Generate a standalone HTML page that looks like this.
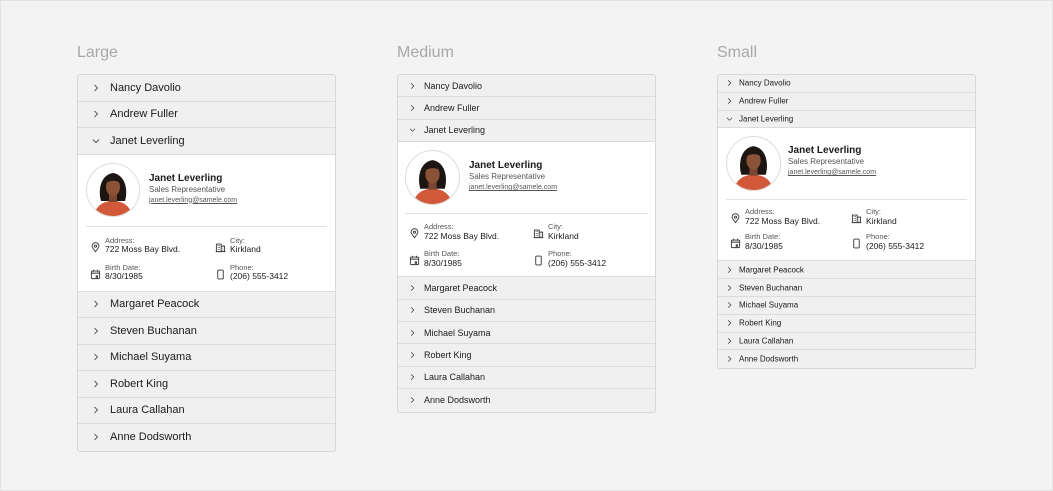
<!DOCTYPE html>
<html><head><meta charset="utf-8"><style>
*{margin:0;padding:0;box-sizing:border-box}
body{width:1053px;height:491px;background:#f3f3f3;font-family:"Liberation Sans",sans-serif;color:#1a1a1a;position:relative;overflow:hidden}
.fr{position:absolute;left:0;top:0;width:1053px;height:491px;border:1px solid #e2e2e2}
.t{position:absolute;font-size:16px;color:#a8a8a8}
.p{position:absolute;width:259px;border:1px solid #d8d8d8;border-radius:3px;background:#f0f0f0;overflow:hidden}
.r{position:relative;border-bottom:1px solid #dcdcdc;background:#f0f0f0}
.r:last-child{border-bottom:none}
.r span{position:absolute;top:50%;transform:translateY(-50%)}
.r svg.ch{position:absolute;top:50%;transform:translateY(-50%)}
.c{position:relative;background:#fff;border-bottom:1px solid #dcdcdc}
.c>*{position:absolute}
.lb{color:#555}
.dv{height:1px;background:#e2e2e2}
.em{color:#555;text-decoration:underline}
</style></head><body>
<div class="fr"></div>
<div class="t" style="left:77px;top:44px">Large</div>
<div class="t" style="left:397px;top:44px">Medium</div>
<div class="t" style="left:717px;top:44px">Small</div>
<div id="L" class="p" style="left:77px;top:74px"></div>
<div id="M" class="p" style="left:397px;top:74px"></div>
<div id="S" class="p" style="left:717px;top:74px"></div>
<script>
var names=["Nancy Davolio","Andrew Fuller","Janet Leverling","Margaret Peacock","Steven Buchanan","Michael Suyama","Robert King","Laura Callahan","Anne Dodsworth"];
function av(s){return '<svg width="'+s+'" height="'+s+'" viewBox="0 0 54 54"><circle cx="27" cy="27" r="26.5" fill="#fff" stroke="#ddd"/><clipPath id="cp'+s+'"><circle cx="27" cy="27" r="26"/></clipPath><g clip-path="url(#cp'+s+')"><path d="M15 38 C12 28 14 12 27 10 C40 12 42 28 39 38 Z" fill="#1d1512"/><path d="M8 56 C8 44 16 38 27 38 C38 38 46 44 46 56Z" fill="#d2583a"/><rect x="23" y="30" width="8" height="9" fill="#7a4630"/><ellipse cx="27" cy="24" rx="7" ry="9" fill="#8a5236"/><path d="M20 20 C22 13 32 13 34 20 C31 17 24 17 20 20Z" fill="#1d1512"/></g></svg>';}
function ic(t,s){var st='fill="none" stroke="#333" stroke-width="1.3"';var p={
pin:'<path d="M8 14 C4 9 3 7 3 6 A5 5 0 0 1 13 6 C13 7 12 9 8 14Z" '+st+'/><circle cx="8" cy="6" r="1.6" '+st+'/>',
city:'<path d="M2 14V3h7v11M9 6h5v8M1 14h14M4 5h1M6 5h1M4 8h1M6 8h1M4 11h1M6 11h1M11 9h1M11 12h1" '+st+'/>',
cal:'<rect x="2" y="3" width="12" height="11" rx="1.5" '+st+'/><path d="M2 6h12M5 1v3M11 1v3M9 10h2v2H9z" '+st+'/>',
ph:'<rect x="4" y="1.5" width="8" height="13" rx="1.5" '+st+'/>'}[t];
return '<svg width="'+s+'" height="'+s+'" viewBox="0 0 16 16">'+p+'</svg>';}
function chev(x,s,exp){var d=exp?'M2 5l6 6 6-6':'M5 2l6 6-6 6';return '<svg class="ch" style="left:'+x+'px" width="'+s+'" height="'+s+'" viewBox="0 0 16 16"><path d="'+d+'" fill="none" stroke="#333" stroke-width="1.6"/></svg>';}
function build(id,c){var h='';names.forEach(function(n,k){
var exp=k==2;h+='<div class="r" style="height:'+c.rh+'px;font-size:'+c.fs+'px">'+chev(c.cx,c.cs,exp)+'<span style="left:'+c.tx+'px">'+n+'</span></div>';
if(exp){var d=c.d;h+='<div class="c" style="height:'+d.h+'px">'+
'<div style="left:'+d.ax+'px;top:'+d.ay+'px">'+av(d.as)+'</div>'+
'<div style="left:'+d.nx+'px;top:'+d.ny+'px;font-size:'+d.nf+'px;font-weight:bold">Janet Leverling</div>'+
'<div class="lb" style="left:'+d.nx+'px;top:'+(d.ny+d.nf+2)+'px;font-size:'+d.sf+'px">Sales Representative</div>'+
'<div class="em" style="left:'+d.nx+'px;top:'+(d.ny+d.nf+d.sf+6)+'px;font-size:'+(d.sf-1)+'px">janet.leverling@samele.com</div>'+
'<div class="dv" style="left:'+d.ax+'px;right:'+d.ax+'px;top:'+d.dy+'px"></div>';
[[0,'pin','Address:','722 Moss Bay Blvd.'],[1,'city','City:','Kirkland'],[2,'cal','Birth Date:','8/30/1985'],[3,'ph','Phone:','(206) 555-3412']].forEach(function(f){
var col=f[0]%2,row=f[0]>>1;var x=col?d.c2:d.c1;var y=d.fy+row*d.rg;
h+='<div style="left:'+x+'px;top:'+(y+4)+'px">'+ic(f[1],d.is)+'</div><div class="lb" style="left:'+(x+d.is+4)+'px;top:'+y+'px;font-size:'+d.lf+'px">'+f[2]+'</div><div style="left:'+(x+d.is+4)+'px;top:'+(y+d.lf+1)+'px;font-size:'+(d.lf+1)+'px">'+f[3]+'</div>';});
h+='</div>';}});
document.getElementById(id).innerHTML=h;}
build('L',{rh:26.5,fs:11,cx:14,cs:8,tx:32,d:{h:137,ax:8,ay:8,as:54,nx:71,ny:18,nf:10,sf:8,dy:71,c1:12,c2:137,fy:81,rg:27,is:11,lf:7.5}});
build('M',{rh:22.4,fs:9,cx:11,cs:7,tx:26,d:{h:135,ax:7,ay:8,as:55,nx:71,ny:18,nf:10,sf:8,dy:71,c1:11,c2:135,fy:80,rg:27,is:11,lf:7.5}});
build('S',{rh:17.8,fs:8,cx:8,cs:7,tx:21,d:{h:133,ax:8,ay:8,as:55,nx:70,ny:17,nf:10,sf:8,dy:71,c1:12,c2:133,fy:79,rg:25,is:11,lf:7.5}});
</script>
</body></html>
